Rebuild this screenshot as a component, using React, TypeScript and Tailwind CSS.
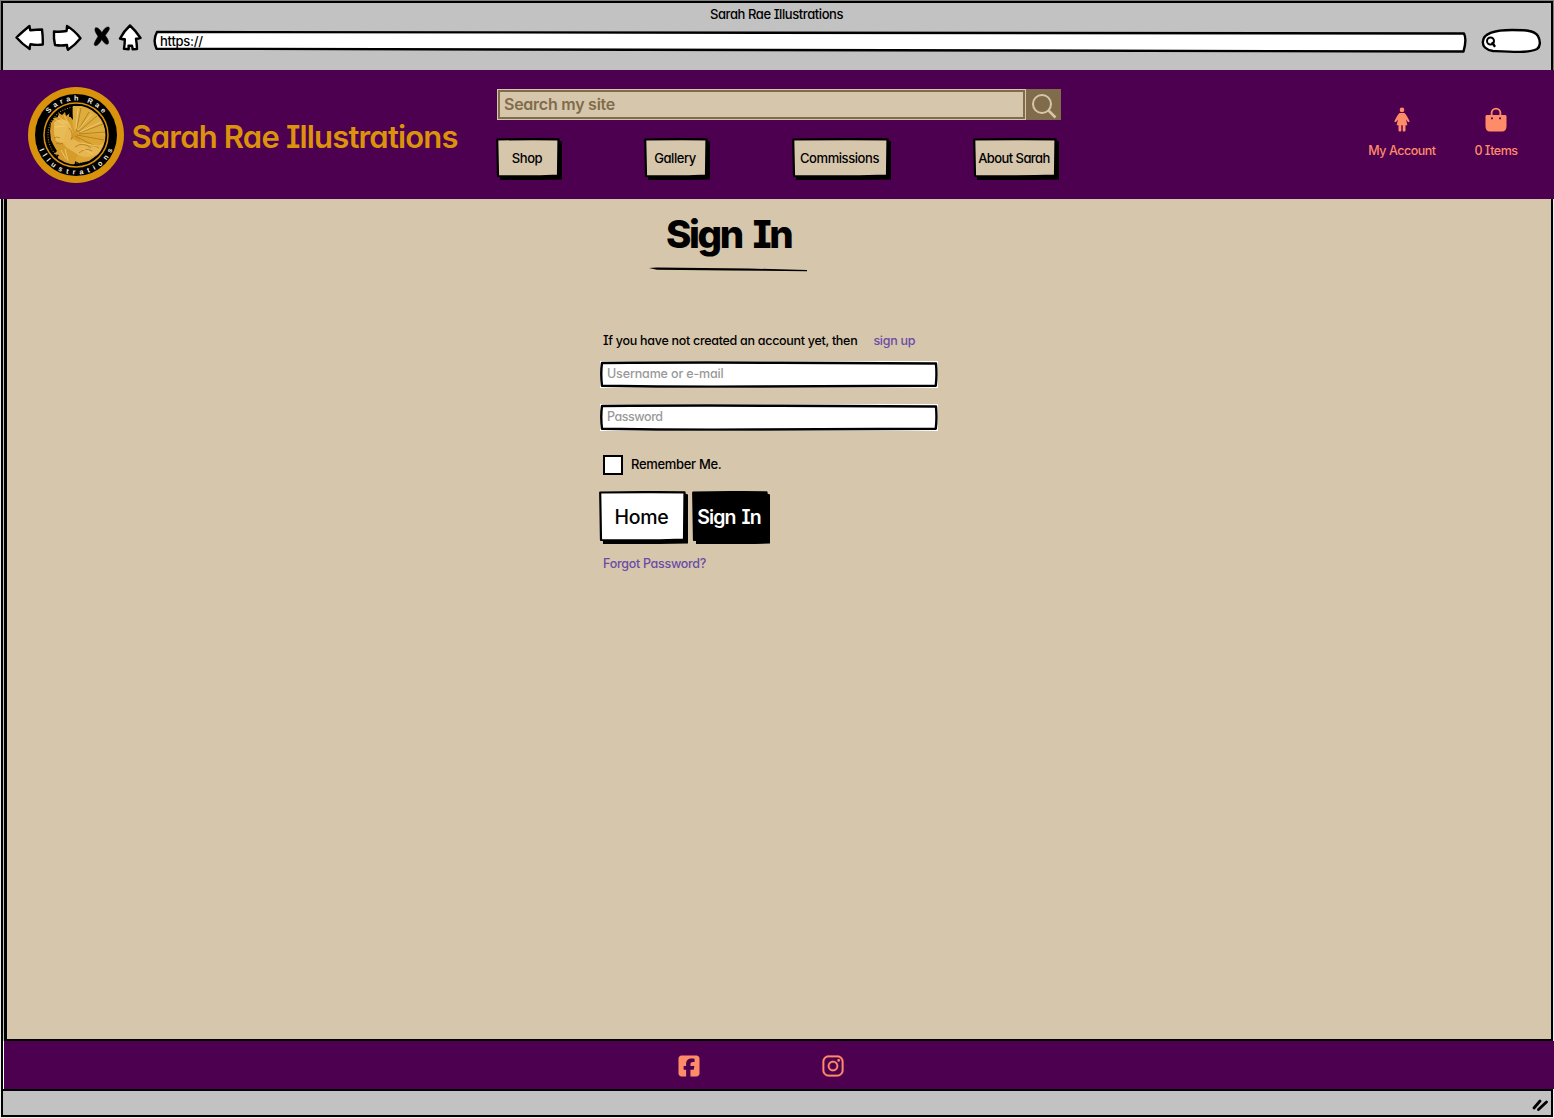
import React from "react";
import { FaSquareFacebook } from "react-icons/fa6";
import { IoLogoInstagram } from "react-icons/io5";

const Stroke = ({ children, box, className }: { children: React.ReactNode; box: string; className: string }) => (
  <svg viewBox={box} className={className} fill="white" stroke="black" strokeWidth="2.4" strokeLinejoin="round" strokeLinecap="round">
    {children}
  </svg>
);

function BrowserBar() {
  return (
    <div className="h-[70px] bg-[#7f837f] px-px pt-px">
      <div className="h-[69px] border-x-[2px] border-t-[2px] border-black bg-[#c2c2c2]">
        <div className="flex h-[20px] justify-center pt-[2px] pr-[1px] text-[13px] leading-[18px] tracking-[-0.42px]">
          Sarah Rae Illustrations
        </div>
        <div className="flex items-start">
          <Stroke box="0 0 130 30" className="mt-[0.5px] ml-[12px] h-[30px] w-[130px] shrink-0">
            <path d="M1.500 13.500Q6 9 14.500 2q.3 3 .8 4.300Q22 5.500 27 5.500q1 7 .8 15-6 .8-12.300-.3-1 2.500-.8 4.800Q7 20 1.500 13.500z" />
            <path d="M39 7.500q6 .8 12.500-.5.500-2.500.500-5Q59 6 65.500 14.200 60 21 53 25.800q-1-2.300-1-4.800-6 1-12 0-1.500-6-1-13.500z" />
            <path d="M80.500 4c2-1 3.500.5 6.500 4.500C89 4.500 92 2 94 3.300c1.800 1.500-2 5.500-3.700 8.200 2.700 3.500 4.300 7 2.700 8.500-2 1.200-4.200-1.200-6.300-4.400-1.700 3.400-4.700 7-6.900 5.800-1.900-1.200 1.200-5.200 3.200-9.200-2.500-3.500-4.100-6.800-2.500-8.200z" fill="black" stroke="black" strokeWidth=".5" />
            <path d="M115 1.500Q121 7 125.500 14q-2 .8-4.500.8.800 5 1 10.200l-4.300.300q-.2-2-.7-3.500h-3.500q.3 1.500.2 3.500l-4.700-.5q.8-4.500.8-9.500-2.500 0-4.800-.8Q109 7 115 1.500z" />
          </Stroke>
          <div className="relative mt-[7px] ml-[8px] flex h-[23px] w-[1315px] items-center pl-[7px]">
            <Stroke box="0 0 1315 23" className="absolute inset-0 h-[23px] w-[1315px]">
              <path d="M4 2Q400 1.200 1311 3.500q3 6-.5 18Q800 20 3.500 18.700-.5 10 4 2z" />
            </Stroke>
            <span className="relative -top-[1px] text-[13px] leading-[18px] tracking-[-0.25px]">https://</span>
          </div>
          <Stroke box="0 0 62 26" className="mt-[5px] ml-[12px] h-[26px] w-[62px]">
            <path d="M3 13C4 4 20 2 32 2s22 0 26 6c3 6 2 11-1 13-8 4-24 3-44 2C6 22 2 18 3 13z" />
            <circle cx="10.500" cy="13" r="3.500" strokeWidth="2" />
            <path d="m12.500 15 2 3" />
          </Stroke>
        </div>
      </div>
    </div>
  );
}

function Logo() {
  return (
    <svg viewBox="0 0 98 98" className="h-[98px] w-[98px]">
      <defs>
        <path id="arcTop" d="M14.500 49a34.500 34.500 0 0 1 69 0" />
        <path id="arcBottom" d="M9.500 49a39.500 39.500 0 0 0 79 0" />
        <clipPath id="disc"><circle cx="49" cy="49" r="29.500" /></clipPath>
      </defs>
      <circle cx="49" cy="49" r="48" fill="#d8920c" />
      <circle cx="49" cy="49" r="41" fill="black" />
      <circle cx="49" cy="49" r="32" fill="black" stroke="#d8920c" strokeWidth="1.500" />
      <circle cx="49" cy="49" r="28" fill="none" stroke="#a98222" strokeWidth="1.100" strokeDasharray="1 1.500" />
      <g clipPath="url(#disc)">
        <path d="M46 20l16 0 14 12 5 16-5 17-14 10-10 2-12-6z" fill="#dda633" />
        <path d="M24 37l3-4-1-1 5-1 1-4 3 2 3-3 1 4 4-3-1 4 4 0 1 6 2 8 4 8-1 12-5 14-5 3-1-4-3 4-1-5-4 2 1-5-5 1 3-6-5-1 3-3-3-5-3-6-1-9z" fill="#d59c2c" />
        <path d="M27 36c8-5 14-2 17 4l-2 11-4 7-9-3-2-8z" fill="#e9bb55" />
        <path d="M41 38c5 4 6 10 3 15 4 0 8 3 13 6 6 2 12 3 20-2l-5 10c-8 6-18 5-25-1-7-4-12-6-10-14z" fill="#e7b650" />
        <path d="M46 20c-1 13-1 20 2 26l30 4C79 32 63 20 46 20z" fill="#dfac3e" />
        <g stroke="#9b6a17" strokeWidth=".6" fill="none">
          <path d="M49 46 54 22M50 46l12-20M51 46l19-16M52 47l24-9M52 48l26-2M50 49l27 5M48 50l24 12" />
          <path d="M27 52q3-2 6 0M29 57q4 2 7 0M42 42q5 5 2 12M48 61q8-6 16 1M52 67q7-6 13-2" />
        </g>
        <g stroke="#f4cf76" strokeWidth=".8" fill="none">
          <path d="M49 43l2-21M51 44l14-16M53 46l21-10M28 33l9 5M31 30l8 7M37 29l4 8M28 41l10-1M34 64l5 9M38 63l3 12M54 57l16 3M56 63l10 5" />
        </g>
        <path d="M46 34l-4-5 3-11z" fill="black" />
      </g>
      <g fill="#f3eee2" fontFamily="Liberation Sans" fontWeight="700" fontSize="7.200">
        <text textLength="62"><textPath href="#arcTop" startOffset="23" textLength="62">Sarah Rae</textPath></text>
        <text textLength="94"><textPath href="#arcBottom" startOffset="15" textLength="94">Illustrations</textPath></text>
      </g>
    </svg>
  );
}

function SketchButton({ w, h, label, className, dark }: { w: number; h: number; label: string; className: string; dark?: boolean }) {
  const fill = dark ? "black" : h > 45 ? "white" : "#d6c6ac";
  return (
    <button className={`relative flex items-center justify-center ${className}`}>
      <svg viewBox={`0 0 ${w} ${h}`} className="absolute inset-0 h-full w-full">
        <path d={`M4 6 ${w - 3} 2.500 ${w} 3.500V${h - 0.5}Q${w / 2} ${h + 0.5} 4 ${h}z`} fill="black" />
        <path d={`M1.200 1.500Q${w / 2} .8 ${w - 3.5} 1.300L${w - 4} ${h - 4.500}Q${w / 2} ${h - 3} 2 ${h - 4}z`} fill={fill} stroke="black" strokeWidth="2.200" strokeLinejoin="round" />
      </svg>
      <span className="relative whitespace-nowrap">{label}</span>
    </button>
  );
}

function Header() {
  return (
    <header className="flex h-[129px] items-start bg-[#4e0050]">
      <div className="mt-[15.500px] ml-[26.500px]"><Logo /></div>
      <h1 className="mt-[47px] ml-[7px] w-[365.500px] text-[31px] leading-[40px] font-semibold tracking-[-0.820px] whitespace-nowrap text-[#dc930c]">
        Sarah Rae Illustrations
      </h1>
      <div className="mt-[19px] w-[564px]">
        <div className="flex h-[31px] border border-r-0 border-[#d6c6ac]">
          <div className="flex w-[527px] items-center border-[2px] border-[#806c4b] bg-[#d6c6ac] pb-px pl-[4px] text-[16px] font-semibold tracking-[-0.250px] text-[#806c4b]">
            Search my site
          </div>
          <div className="-my-px flex w-[36px] items-center justify-center border-l border-[#d6c6ac] bg-[#806c4b]">
            <svg viewBox="0 0 26 26" className="mt-[3px] h-[26px] w-[26px]" fill="none" stroke="#d6c6ac" strokeWidth="2">
              <circle cx="11" cy="11" r="9" /><path d="m17.500 17.500 7 7" strokeWidth="2.500" />
            </svg>
          </div>
        </div>
        <nav className="-ml-px flex pt-[18px] text-[13px] tracking-[-0.430px]">
          <SketchButton w={66} h={42} label="Shop" className="mr-[82px] h-[42px] w-[66px] pr-[4px]" />
          <SketchButton w={66} h={42} label="Gallery" className="mr-[82px] h-[42px] w-[66px] pr-[4px]" />
          <SketchButton w={99} h={42} label="Commissions" className="mr-[82px] h-[42px] w-[99px] pr-[4px]" />
          <SketchButton w={86} h={42} label="About Sarah" className="h-[42px] w-[86px] pr-[4px] tracking-[-0.580px]" />
        </nav>
      </div>
      <div className="mt-[37px] ml-[301px] flex text-[12.500px] leading-[18px] tracking-[-0.480px] text-[#ff8c69]">
        <div className="flex w-[80px] flex-col items-center gap-[10px]">
          <svg viewBox="0 0 16 25" className="h-[25px] w-[16px]" fill="currentColor">
            <circle cx="8" cy="2.900" r="2.300" />
            <path d="M5.500 6h5c1.800 1.500 3.500 5 5 8 .4 1-1 1.700-1.700.8L12 12.500l1.400 5.800h-1.900v5.200c0 .6-.4.900-1 .9h-1c-.6 0-.8-.3-.8-.9v-5.200H7.300v5.200c0 .6-.2.900-.8.900h-1c-.6 0-1-.3-1-.9v-5.200H2.600L4 12.500l-1.800 2.300C1.500 15.700.1 15 .5 14c1.500-3 3.200-6.500 5-8z" />
          </svg>
          <span className="whitespace-nowrap">My Account</span>
        </div>
        <div className="ml-[14px] flex w-[80px] flex-col items-center gap-[10px]">
          <svg viewBox="0 0 22 25" className="h-[25px] w-[22px]" fill="currentColor">
            <path fillRule="evenodd" d="M2 8h3.700V6a5.300 5.300 0 0 1 10.600 0v2H20c1 0 1.500.6 1.500 1.500v10c0 3-1.800 5-4.500 5H5c-2.700 0-4.500-2-4.500-5v-10C.5 8.600 1 8 2 8zM7.500 8h7V6a3.500 3.500 0 0 0-7 0zM6 10.500v1.800h1.900v-1.800zm8.100 0v1.800H16v-1.800z" />
          </svg>
          <span>0 Items</span>
        </div>
      </div>
    </header>
  );
}

function Field({ label, tracking }: { label: string; tracking: string }) {
  return (
    <div className={`relative flex h-[27px] w-[338px] items-center bg-white pl-[7px] text-[12.500px] text-[#999] ${tracking}`}>
      <svg viewBox="0 0 338 27" className="absolute inset-0 h-[27px] w-[338px]" fill="none" stroke="black" strokeWidth="2.400" strokeLinejoin="round">
        <path d="M2 2Q100 1.200 180 1.800T336 2.500q1 12-.2 22.200Q240 25 160 25.500T2 24.800Q.5 12 2 2z" />
      </svg>
      <span className="relative">{label}</span>
    </div>
  );
}

function SignIn() {
  return (
    <main className="mx-px h-[842px] border-x-[2px] border-black bg-[#c2c2c2] pl-[1px]">
      <div className="h-full border-b-[2px] border-l-[3px] border-black bg-[#d6c6ac]">
        <div className="ml-[593px] w-[345px]">
          <h2 className="pt-[10px] pl-[66px] text-[38.500px] leading-[50px] font-extrabold tracking-[-2.400px] [word-spacing:5px]">Sign In</h2>
          <svg viewBox="0 0 160 5" className="mt-[8px] ml-[49px] h-[5px] w-[160px]">
            <path d="M0 1 8 .6 100 1.500l58 1.500v1.300L80 3.500 8 2.800z" />
          </svg>
          <p className="mt-[60px] ml-[3px] text-[12.500px] leading-[18px] tracking-[-0.290px] whitespace-nowrap">
            If you have not created an account yet, then
            <a className="ml-[16px] text-[#6a4ba6]">sign up</a>
          </p>
          <div className="mt-[11px] flex flex-col gap-[16px]">
            <Field label="Username or e-mail" tracking="tracking-[-0.150px]" />
            <Field label="Password" tracking="tracking-[-0.450px]" />
          </div>
          <div className="mt-[24px] ml-[3px] flex h-[20px] items-center gap-[8px] text-[13px] tracking-[-0.320px]">
            <span className="h-[20px] w-[20px] border-[2px] border-black bg-white" />
            Remember Me.
          </div>
          <div className="mt-[16px] -ml-px flex gap-[4px] text-[19.500px]">
            <SketchButton w={89} h={53} label="Home" className="h-[53px] w-[89px] pr-[4px] tracking-[-0.300px]" />
            <SketchButton w={78} h={53} label="Sign In" dark className="h-[53px] w-[78px] pr-[4px] font-semibold tracking-[-0.900px] text-white [word-spacing:2px]" />
          </div>
          <a className="mt-[11px] ml-[3px] block text-[12.500px] leading-[18px] tracking-[-0.290px] text-[#6a4ba6]">Forgot Password?</a>
        </div>
      </div>
    </main>
  );
}

export default function App() {
  return (
    <div className="h-[1118px] w-[1554px] overflow-hidden bg-[#eee] font-['Inter',sans-serif] font-medium text-black [font-feature-settings:'cv08','cv11','calt'_0]">
      <BrowserBar />
      <Header />
      <SignIn />
      <footer className="ml-px flex h-[48px] items-center border-l-[2px] border-black bg-white pl-px text-[#ff8c69]">
        <div className="flex h-full w-full items-center bg-[#4e0050] pt-[2px]">
          <FaSquareFacebook className="ml-[673px] h-[24px] w-[24px]" />
          <IoLogoInstagram className="ml-[120px] h-[24px] w-[24px]" stroke="currentColor" strokeWidth="5" />
        </div>
      </footer>
      <div className="mx-px flex h-[28px] items-center justify-end border-[2px] border-black bg-[#c2c2c2]">
        <svg viewBox="0 0 16 13" className="mt-[2px] mr-[3px] h-[13px] w-[16px]" stroke="black" strokeWidth="2.800" strokeLinecap="round">
          <path d="M2 10 8 3M6.500 11.500 14.500 4" />
        </svg>
      </div>
    </div>
  );
}
